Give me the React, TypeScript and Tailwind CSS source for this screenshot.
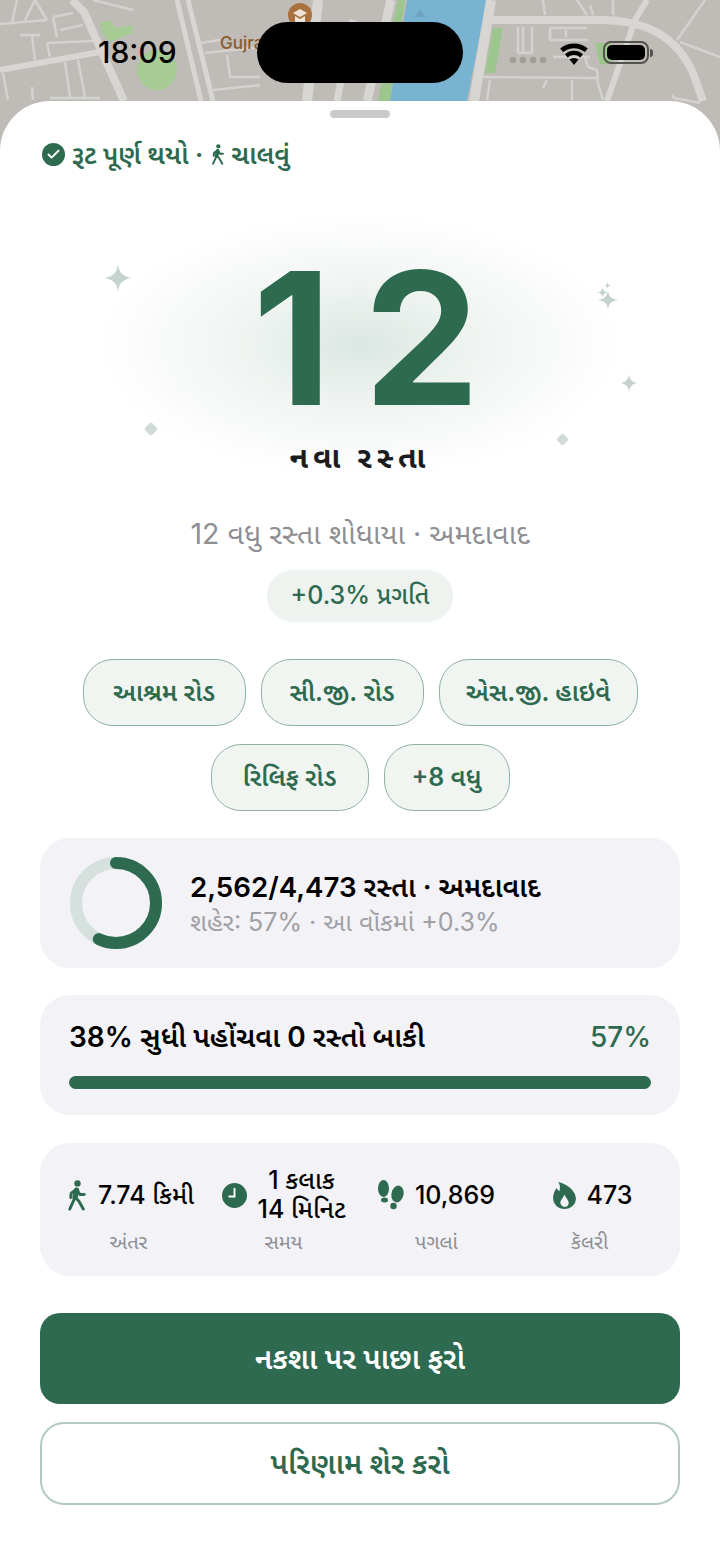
import React from "react";
import { Check } from "lucide-react";

const GREEN = "#2d6a4f";

const MapBackdrop = () => (
  <svg viewBox="0 0 720 150" className="absolute top-0 left-0 w-[720px] h-[150px]" fill="none">
    <rect width="720" height="150" fill="#bfbcb8" />
    {/* water and parks */}
    <path d="M407 0H487L467 101V150H390V101Z" fill="#79b3d2" />
    <path d="M420 9L426 17H414Z" fill="#6ea3c0" />
    <ellipse cx="157" cy="70" rx="20" ry="20" fill="#a6cb94" />
    <path d="M100 23L110 20L115 28L132 25L133 33L110 42L102 33Z" fill="#a6cb94" />
    <path d="M398 0H405L390 101H378L387 50Z" fill="#9cc68e" />
    <path d="M493 28H503L495 73H485Z" fill="#9cc68e" />
    <path d="M595 43H610L613 63L600 65Z" fill="#9cc68e" />
    {/* main roads */}
    <g stroke="#d7d6d2" strokeWidth="8">
      <path d="M72 0L84 12L124 101" />
      <path d="M0 70L100 52" strokeWidth="6" />
      <path d="M318 0L307 101" strokeWidth="10" />
      <path d="M391 0L367 101" strokeWidth="9" />
      <path d="M353 20L337 101" strokeWidth="7" />
      <path d="M491 0L474 101" strokeWidth="10" />
      <path d="M490 20H600C640 20 675 32 693 73L703 101" />
      <path d="M647 0L635 20L607 101" strokeWidth="6" />
      <path d="M177 0L201 101" strokeWidth="5" />
      <path d="M188 0L213 101" strokeWidth="5" />
    </g>
    {/* side streets */}
    <g stroke="#d3d2ce" strokeWidth="2.5" strokeLinejoin="round">
      <path d="M0 24L47 20M12 22L17 0M25 20L35 0L47 20" />
      <path d="M20 35H40M32 35L35 60M47 43L93 41M47 43L50 57" />
      <path d="M53 17L73 13M53 17L57 37M60 30L83 25M93 0L133 10" />
      <path d="M65 62L70 97M78 60L85 97M3 73L8 100M32 87L33 100M50 98H100" />
      <path d="M200 43L220 40M205 53L260 47M227 55L230 77H260M213 90L260 85" />
      <path d="M518 27V53M523 27V53M532 27V53M518 53H532" />
      <path d="M550 28H587M550 28V40H588M566 30V37" />
      <path d="M553 57H590M585 57L588 67L597 70L598 80" />
      <path d="M483 77L597 78M490 80L487 100M572 80V100M547 80L543 88M597 80L603 100" />
      <path d="M543 0L545 15M590 5L593 15M613 0V15M577 0L587 15" />
      <path d="M705 0L677 40M680 42L720 57M672 95L674 98L700 103" />
    </g>
    <circle cx="300" cy="15" r="12" fill="#a9713d" />
    <path d="M293 13L300 9L307 13L300 17ZM295 16V23H305V16L300 19Z" fill="#f0e4d8" />
    <g fill="#a09c97">
      <circle cx="513" cy="60" r="3.2" />
      <circle cx="523" cy="60" r="3.2" />
      <circle cx="533" cy="60" r="3.2" />
      <circle cx="543" cy="60" r="3.2" />
    </g>
  </svg>
);

const StatusBar = () => (
  <div className="absolute top-0 left-0 w-[720px] h-[101px]">
    <span className="absolute left-[98px] top-[33px] text-[30px] leading-[38px] font-medium text-black font-['Inter']">18:09</span>
    <span className="absolute left-[220px] top-[32px] text-[17px] leading-[22px] font-medium text-[#8a5a2c] font-['Inter']">Gujra</span>
    <div className="absolute left-[257px] top-[22px] w-[206px] h-[61px] rounded-[31px] bg-black" />
    <svg viewBox="0 0 30 24" className="absolute left-[559px] top-[41px] w-[30px] h-[24px]" fill="#000">
      <path d="M15 24L10.5 18.6A6.8 6.8 0 0 1 19.5 18.6Z" />
      <path d="M8.7 16.4L6 13.2A13.5 13.5 0 0 1 24 13.2L21.3 16.4A9.6 9.6 0 0 0 8.7 16.4Z" />
      <path d="M4.2 11L1.2 7.4A21.6 21.6 0 0 1 28.8 7.4L25.8 11A17 17 0 0 0 4.2 11Z" />
    </svg>
    <div className="absolute left-[603px] top-[41px] w-[46px] h-[23px] rounded-[8px] border-2 border-[#55534f] p-[2px]">
      <div className="w-full h-full rounded-[5px] bg-black" />
    </div>
    <div className="absolute left-[650px] top-[49px] w-[3px] h-[8px] rounded-r-full bg-[#55534f]" />
  </div>
);

const Sparkle = ({ size, className }: { size: number; className: string }) => (
  <svg viewBox="0 0 24 24" width={size} height={size} className={className} fill="#c5d3cd">
    <path d="M12 0C12.8 7.5 16 11 24 12C16 13 12.8 16.5 12 24C11.2 16.5 8 13 0 12C8 11 11.2 7.5 12 0Z" />
  </svg>
);

const Chip = ({ label, width }: { label: string; width: string }) => (
  <div className={`${width} h-[67px] flex items-center justify-center rounded-[30px] border-[1.5px] border-[#90b2a3] bg-[#f0f5f2] text-[25px] font-semibold text-[#2d6a4f]`}>
    {label}
  </div>
);

const Walker = ({ className }: { className: string }) => (
  <svg viewBox="0 0 20 32" className={className} fill="none" stroke={GREEN} strokeWidth="3" strokeLinecap="round" strokeLinejoin="round">
    <circle cx="10.5" cy="3.5" r="3.3" fill={GREEN} stroke="none" />
    <path d="M9.5 10.5L8 18" strokeWidth="5.5" />
    <path d="M9 10L4 13.5L3.5 18M10 10L13 15H17.5M8 18L2.5 30M8.5 18L12 22L16.5 30" />
  </svg>
);

const Stat = ({ icon, value, label, labelClass, groupClass }: { icon: React.ReactNode; value: React.ReactNode; label: string; labelClass?: string; groupClass?: string }) => (
  <div className="flex-1 flex flex-col items-center">
    <div className={`h-[56px] flex items-center gap-[11px] ${groupClass ?? ""}`}>
      {icon}
      <div className="text-[25px] leading-[29px] font-medium text-black text-center whitespace-nowrap">{value}</div>
    </div>
    <div className={`mt-[6px] text-[20px] leading-[26px] text-[#8e8e93] ${labelClass ?? ""}`}>{label}</div>
  </div>
);

export default function App() {
  return (
    <div className="relative w-[720px] h-[1564px] overflow-hidden bg-white font-['Inter','Noto_Sans_Gujarati','Noto_Sans',sans-serif]">
      <MapBackdrop />
      <StatusBar />

      <div className="absolute top-[101px] left-0 w-[720px] h-[1463px] rounded-t-[50px] bg-white px-[40px]">
        <div className="mx-auto mt-[9px] w-[60px] h-[8px] rounded-full bg-[#c9c9cc]" />

        <div className="mt-[22px] flex items-center h-[28px] text-[26px] font-semibold text-[#2d6a4f] whitespace-nowrap">
          <span className="ml-[2px] mr-[7px] w-[23px] h-[23px] rounded-full bg-[#2d6a4f] flex items-center justify-center">
            <Check size={15} color="#fff" strokeWidth={3} />
          </span>
          <span>રૂટ પૂર્ણ થયો ·</span>
          <Walker className="ml-[8px] mr-[6px] w-[14px] h-[21px]" />
          <span>ચાલવું</span>
        </div>

        <div className="relative mt-[46px] h-[278px] flex flex-col items-center">
          <div className="absolute left-[60px] top-[0px] w-[520px] h-[262px] bg-[radial-gradient(ellipse_closest-side,#dce7e2_0%,#eff4f1_45%,#f8faf9_75%,#ffffff_100%)]" />
          <Sparkle size={28} className="absolute left-[64px] top-[50px]" />
          <Sparkle size={20} className="absolute left-[558px] top-[76px]" />
          <Sparkle size={11} className="absolute left-[557px] top-[73px]" />
          <Sparkle size={7} className="absolute left-[564px] top-[68px]" />
          <Sparkle size={18} className="absolute left-[580px] top-[160px]" />
          <div className="absolute left-[106px] top-[210px] w-[10px] h-[10px] rotate-45 rounded-[2px] bg-[#cfdcd6]" />
          <div className="absolute left-[518px] top-[221px] w-[9px] h-[9px] rotate-45 rounded-[2px] bg-[#cfdcd6]" />
          <div className="relative mt-[49px] pl-[44px] text-[184px] leading-[150px] font-bold tracking-[32px] text-[#2d6a4f]">12</div>
          <div className="relative mt-[26px] text-[30px] leading-[36px] font-bold tracking-[5px] text-[#1c1c1e]">નવા રસ્તા</div>
        </div>

        <div className="mt-[24px] text-center text-[28.5px] leading-[36px] text-[#8e8e93]">12 વધુ રસ્તા શોધાયા · અમદાવાદ</div>

        <div className="mt-[18px] flex justify-center">
          <div className="w-[186px] h-[52px] flex items-center justify-center rounded-full bg-[#eef3f0] text-[25px] font-medium text-[#2d6a4f]">+0.3% પ્રગતિ</div>
        </div>

        <div className="mt-[37px] flex flex-wrap justify-center gap-x-[15px] gap-y-[18px]">
          <Chip label="આશ્રમ રોડ" width="w-[163px]" />
          <Chip label="સી.જી. રોડ" width="w-[163px]" />
          <Chip label="એસ.જી. હાઇવે" width="w-[199px]" />
          <Chip label="રિલિફ રોડ" width="w-[158px]" />
          <Chip label="+8 વધુ" width="w-[126px]" />
        </div>

        <div className="mt-[27px] h-[130px] rounded-[30px] bg-[#f2f2f7] flex items-center pl-[30px] gap-[28px]">
          <svg viewBox="0 0 92 92" className="w-[92px] h-[92px]" fill="none">
            <circle cx="46" cy="46" r="40" stroke="#d6e0dc" strokeWidth="12" />
            <circle cx="46" cy="46" r="40" stroke={GREEN} strokeWidth="12" strokeLinecap="round" strokeDasharray="143.3 251.3" transform="rotate(-90 46 46)" />
          </svg>
          <div>
            <div className="text-[27.7px] leading-[36px] font-semibold text-black">2,562/4,473 રસ્તા · અમદાવાદ</div>
            <div className="mt-[2px] text-[25px] leading-[30px] text-[#a0a0a5]">શહેર: 57% · આ વૉકમાં +0.3%</div>
          </div>
        </div>

        <div className="mt-[27px] h-[120px] rounded-[30px] bg-[#f2f2f7] px-[29px] pt-[24px]">
          <div className="flex justify-between text-[28px] leading-[36px]">
            <span className="font-semibold text-black">38% સુધી પહોંચવા 0 રસ્તો બાકી</span>
            <span className="font-medium text-[#2d6a4f]">57%</span>
          </div>
          <div className="mt-[21px] h-[13px] rounded-full bg-[#2d6a4f]" />
        </div>

        <div className="mt-[28px] h-[133px] rounded-[30px] bg-[#f2f2f7] flex items-start px-[14px] pt-[24px]">
          <Stat icon={<Walker className="w-[20px] h-[31px]" />} value="7.74 કિમી" label="અંતર" labelClass="pr-[4px]" />
          <Stat
            icon={
              <svg viewBox="0 0 26 26" className="w-[25px] h-[25px]">
                <circle cx="13" cy="13" r="13" fill={GREEN} />
                <path d="M13 6V14H7.5" stroke="#fff" strokeWidth="2" fill="none" strokeLinecap="round" />
              </svg>
            }
            value={<>1 કલાક<br />14 મિનિટ</>}
            label="સમય"
          />
          <Stat
            icon={
              <svg viewBox="0 0 26 30" className="w-[26px] h-[30px]" fill={GREEN}>
                <ellipse cx="5.5" cy="8.5" rx="5.5" ry="8.5" />
                <ellipse cx="6.5" cy="20" rx="3.5" ry="2.5" />
                <ellipse cx="19.5" cy="14" rx="6" ry="8.5" transform="rotate(12 19.5 14)" />
                <ellipse cx="15.5" cy="26" rx="3.2" ry="3.2" />
              </svg>
            }
            value="10,869"
            label="પગલાં"
          />
          <Stat
            icon={
              <svg viewBox="0 0 22 26" className="w-[23px] h-[27px]" fill={GREEN}>
                <path fillRule="evenodd" d="M5 0C14 2 22 9 22 16C22 22 17 26 11 26C5 26 0 22 0 15C0 11 2 8 3 6C4 7 5 8 6 9C7 6 7 3 5 0ZM11 12C12 15 15 17 15 20C15 23 13 24 11 24C9 24 7 22 7 20C7 17 10 15 11 12Z" />
              </svg>
            }
            value="473"
            label="કૅલરી"
            groupClass="ml-[6px]"
          />
        </div>

        <div className="mt-[37px] h-[91px] rounded-[20px] bg-[#2d6a4f] flex items-center justify-center text-[29.5px] font-semibold text-white">નકશા પર પાછા ફરો</div>
        <div className="mt-[18px] h-[83px] rounded-[24px] border-2 border-[#b4c9c0] bg-white flex items-center justify-center text-[29.5px] font-semibold text-[#2d6a4f]">પરિણામ શેર કરો</div>
      </div>
    </div>
  );
}
